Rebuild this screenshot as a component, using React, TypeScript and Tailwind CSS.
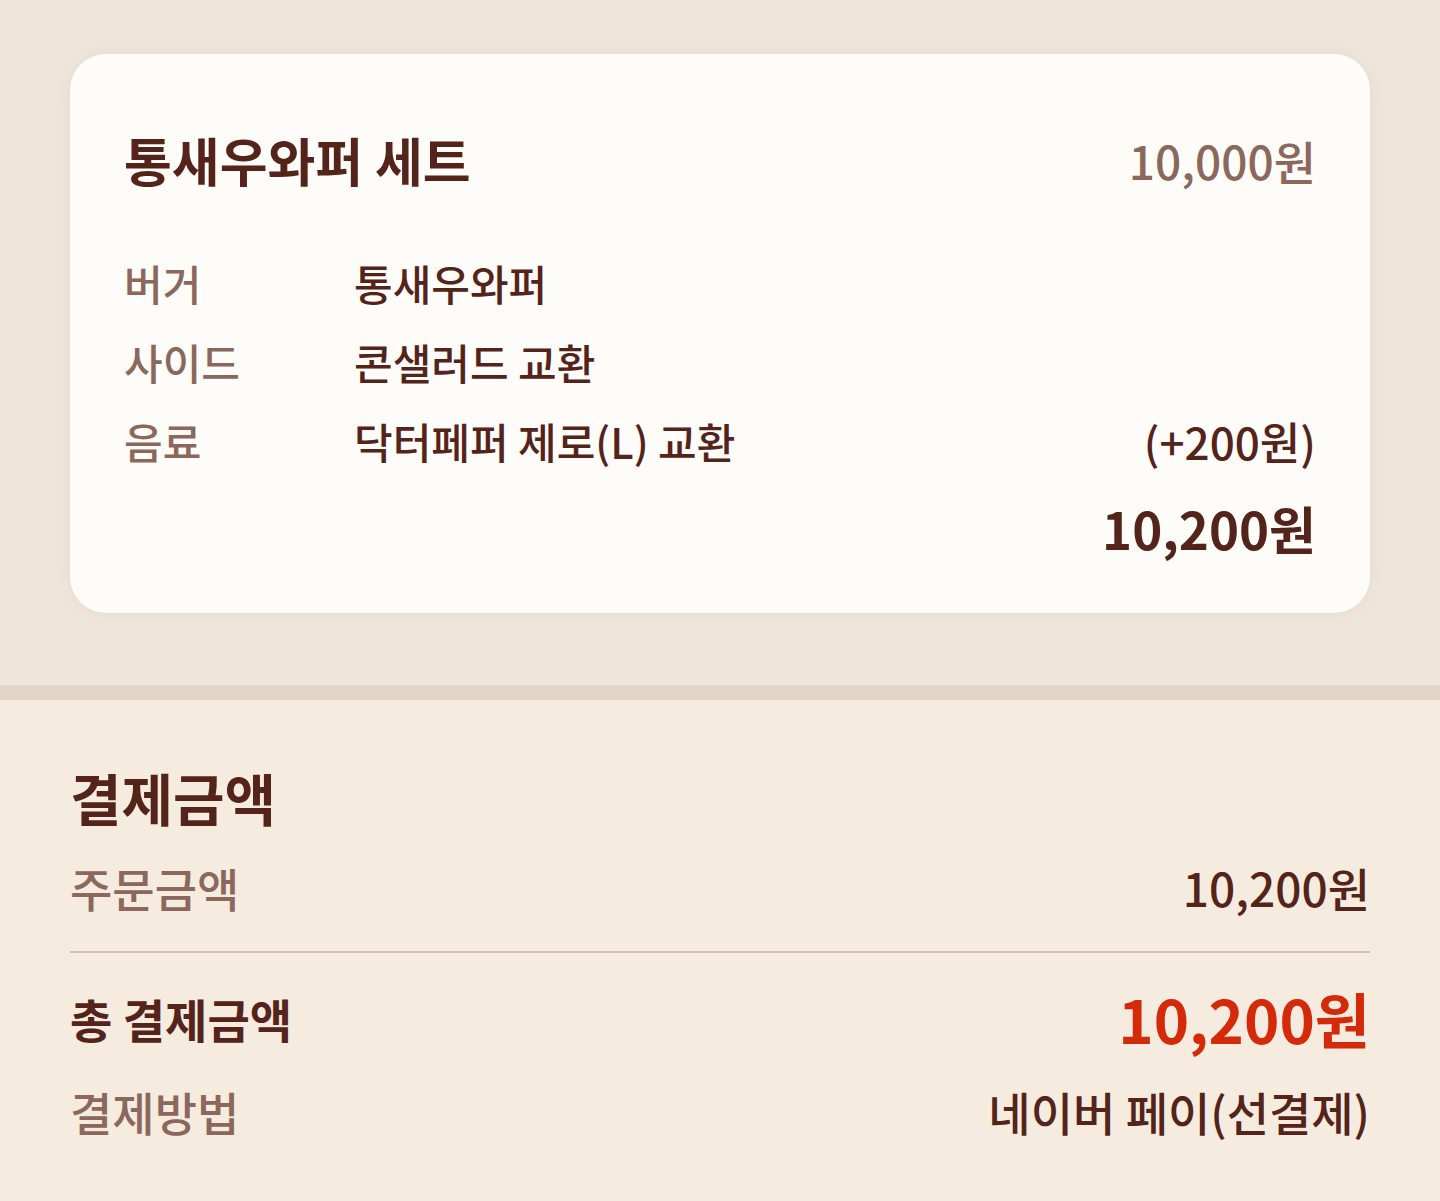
import React from "react";

const font = { fontFamily: '"Noto Sans CJK KR", "Noto Sans", sans-serif' };

export default function App() {
  return (
    <div className="w-[1440px] min-h-[1201px] bg-[#f5ebdf]" style={font}>
      <div className="bg-[#efe6da] px-[70px] pt-[54px] pb-[72px]">
        <div className="rounded-[36px] bg-[#fefcf8] px-[54px] pt-[72px] pb-[50px] shadow-[0_0_16px_rgba(120,80,40,0.08)]">
          <div className="flex items-center justify-between">
            <div className="text-[52px] leading-[68px] font-bold text-[#54231a]">통새우와퍼 세트</div>
            <div className="text-[46px] leading-[68px] font-medium text-[#8b675c]">10,000원</div>
          </div>
          <div className="mt-[61px] flex flex-col gap-[23px]">
            <div className="flex items-center text-[42px] leading-[56px]">
              <div className="w-[230px] font-medium text-[#8b675c]">버거</div>
              <div className="flex-1 font-medium text-[#54231a]">통새우와퍼</div>
            </div>
            <div className="flex items-center text-[42px] leading-[56px]">
              <div className="w-[230px] font-medium text-[#8b675c]">사이드</div>
              <div className="flex-1 font-medium text-[#54231a]">콘샐러드 교환</div>
            </div>
            <div className="flex items-center text-[42px] leading-[56px]">
              <div className="w-[230px] font-medium text-[#8b675c]">음료</div>
              <div className="flex-1 font-medium text-[#54231a]">닥터페퍼 제로(L) 교환</div>
              <div className="text-[44px] font-medium text-[#54231a]">(+200원)</div>
            </div>
          </div>
          <div className="mt-[24px] text-right text-[51px] leading-[70px] font-bold text-[#54231a]">10,200원</div>
        </div>
      </div>
      <div className="h-[15px] bg-[#e2d6c6]" />
      <div className="px-[70px] pt-[59px] pb-[40px]">
        <div className="text-[56px] leading-[76px] font-bold text-[#54231a]">결제금액</div>
        <div className="mt-[22px] flex items-center justify-between text-[46px] leading-[60px] font-medium">
          <div className="text-[#8b675c]">주문금액</div>
          <div className="text-[#54231a]">10,200원</div>
        </div>
        <div className="mt-[34px] h-[2px] bg-[#d3c3b6]" />
        <div className="mt-[30px] flex items-center justify-between">
          <div className="text-[46px] leading-[70px] font-bold text-[#54231a]">총 결제금액</div>
          <div className="text-[60px] leading-[70px] font-bold text-[#d42a0a]">10,200원</div>
        </div>
        <div className="mt-[28px] flex items-center justify-between text-[46px] leading-[60px] font-medium">
          <div className="text-[#8b675c]">결제방법</div>
          <div className="text-[#54231a]">네이버 페이(선결제)</div>
        </div>
      </div>
    </div>
  );
}
